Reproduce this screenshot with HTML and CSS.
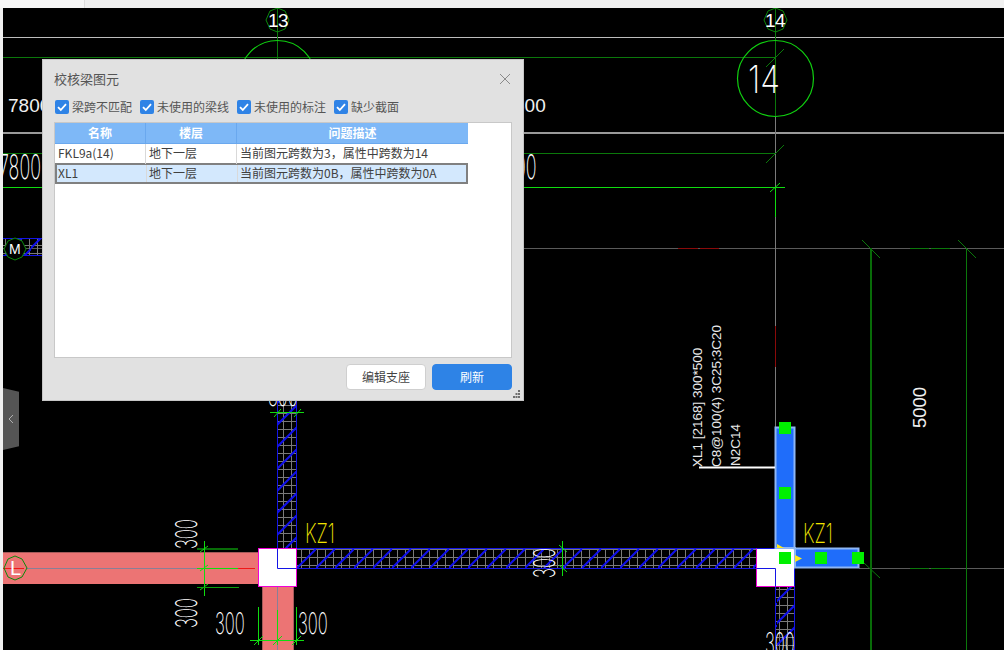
FILE: index.html
```html
<!DOCTYPE html>
<html lang="zh-CN">
<head>
<meta charset="utf-8">
<title>校核梁图元</title>
<link rel="stylesheet" href="styles.css">
</head>
<body>
<div class="app">
  <div class="topbar"><div class="topbar-tab"></div></div>
  <div class="work">
    <div class="gutter"></div>
    <div class="stage">
      <svg class="cad" width="1001" height="642" viewBox="3 8 1001 642" xmlns="http://www.w3.org/2000/svg">
        <defs>
          <pattern id="gridH" width="8" height="8" patternUnits="userSpaceOnUse" x="297" y="549">
            <path class="hatch-grid" d="M4.5 0V8M0 .5H8"/>
          </pattern>
          <pattern id="diagH" width="19" height="20" patternUnits="userSpaceOnUse" x="297" y="548">
            <path class="hatch-diag" d="M-1 21L21 -1M-2 2L2 -2"/>
          </pattern>
          <pattern id="gridV" width="8" height="8" patternUnits="userSpaceOnUse" x="279" y="401">
            <path class="hatch-grid" d="M4.5 0V8M0 4.500H8"/>
          </pattern>
          <pattern id="diagV" width="20" height="22" patternUnits="userSpaceOnUse" x="277" y="405">
            <path class="hatch-diag" d="M-1 21L21 -1"/>
          </pattern>
        </defs>

        <!-- grid lines -->
        <path class="ln-white" d="M3 37.5H1004"/>
        <path class="ln-dkgreen" d="M3 57.5H775M3 153.5H775"/>
        <path class="ln-grey2" d="M3 133H1004"/>
        <path class="ln-green" d="M3 187.5H785"/>
        <path class="ln-axis" d="M3 248.5H1004M859 568.5H1004"/>
        <path class="ln-axis-v" d="M775.5 117V427M775.5 587V650"/>
        <path class="ln-red" d="M678 248.5H698M700 248.5H719M775.5 326V367"/>
        <path class="ln-dkgreen" d="M910 248.5H929M931 248.5H950M910 568.5H929M931 568.5H950"/>
        <path class="ln-dkgreen" d="M775.5 8V117"/>
        <path class="ln-green" d="M775.5 187V217"/>
        <path class="ln-dkgreen" d="M277.5 8V60"/>
        <path class="ln-dkgreen" d="M766 67L784 49M766 163L784 145M862 240L880 258M958 240L976 258M864 563L880 578"/>
        <path class="ln-green" d="M770 192L780 183"/>
        <path class="ln-dkgreen2" d="M871 248V650"/>
        <path class="ln-dkgreen" d="M966.5 248V650"/>

        <!-- axis bubbles -->
        <circle class="bubble-big" cx="277.5" cy="78.5" r="38"/>
        <circle class="bubble-big" cx="775.5" cy="78.500" r="38"/>
        <polygon class="bubble-small" points="277.5,8 285,11 289,20 285,29 277.5,32 270,29 266,20 270,11"/>
        <polygon class="bubble-small" points="775.5,8 783,11 787,20 783,29 775.5,32 768,29 764,20 768,11"/>
        <text class="t-axis" x="268" y="27">13</text>
        <text class="t-axis" x="765" y="27">14</text>
        <text class="t-thin t-big14" transform="translate(748 93) scale(.85 1)">14</text>

        <!-- dimension text -->
        <text class="t-dim" x="8" y="112">7800</text>
        <text class="t-dim" x="514" y="112">800</text>
        <text class="t-thin t-tall" transform="translate(-1 179) scale(.85 1.6)">7800</text>
        <text class="t-thin t-tall" transform="translate(515 179) scale(.85 1.6)">00</text>
        <text class="t-dim5" transform="translate(926 428) rotate(-90)">5000</text>

        <!-- M bubble and hatch -->
        <rect class="fill-gridH" x="3" y="238" width="39" height="17"/>
        <rect class="fill-diagH" x="3" y="238" width="39" height="17"/>
        <path class="ln-blue" d="M3 238.5H42M3 255.5H42"/>
        <polygon class="bubble-small bubble-solid" points="15,238 22,241 26,249 22,257 15,260 8,257 4,249 8,241"/>
        <text class="t-bubble" x="9" y="254">M</text>

        <!-- pink beams -->
        <rect class="pink" x="3" y="552" width="256" height="32"/>
        <rect class="pink" x="262" y="587" width="32" height="63"/>
        <path class="ln-pink-edge" d="M3 552.5H258M262.5 587V650M293.5 587V650"/>
        <path class="ln-beam-c" d="M26 568.5H238M277.5 587V650"/>
        <path class="ln-redb" d="M3 568.5H24M238 568.5H255"/>

        <!-- hatched beams -->
        <rect class="fill-gridH" x="297" y="548" width="459" height="20"/>
        <rect class="fill-diagH" x="297" y="548" width="459" height="20"/>
        <path class="ln-blue" d="M297 548.5H756M297 568.5H756"/>
        <rect class="fill-gridV" x="277" y="401" width="20" height="147"/>
        <rect class="fill-diagV" x="277" y="401" width="20" height="147"/>
        <path class="ln-blue" d="M277.5 401V548M296.5 401V548"/>
        <rect class="fill-gridV" x="775" y="587" width="20" height="63"/>
        <rect class="fill-diagV" x="775" y="587" width="20" height="63"/>
        <path class="ln-blue" d="M775.5 587V650M794.5 587V650"/>

        <!-- columns -->
        <rect class="col" x="258.5" y="548.5" width="38" height="38"/>
        <path class="ln-blue" d="M277.5 548.5V568.5H296.5"/>
        <rect class="col" x="756.5" y="548.5" width="38" height="38"/>
        <path class="ln-blue" d="M756.5 568.5H775.5V586.5M756.5 548.5H794.5V586.5"/>

        <!-- selected beam -->
        <path class="selected" d="M775.5 427.5H794.5V548.5H858.5V567.5H795V548H775.5Z"/>
        <polygon class="arrow" points="777,544 784,548 777,548"/>
        <polygon class="arrow" points="795,555 802,558.5 795,562"/>
        <rect class="grip-g" x="779" y="422" width="12" height="12"/>
        <rect class="grip-g" x="779" y="487" width="12" height="12"/>
        <rect class="grip-g" x="779" y="552" width="12" height="12"/>
        <rect class="grip-g" x="815" y="552" width="12" height="12"/>
        <rect class="grip-g" x="852" y="552" width="12" height="12"/>
        <path class="ln-leader" d="M699 467.5H775"/>
        <text class="t-plain" transform="translate(702 467) rotate(-90)">XL1 [2168] 300*500</text>
        <text class="t-plain" transform="translate(721 467) rotate(-90)">C8@100(4) 3C25;3C20</text>
        <text class="t-plain" transform="translate(740 466) rotate(-90)">N2C14</text>

        <!-- dims around L -->
        <path class="ln-dkgreen2" d="M197 549H238"/>
        <path class="ln-green" d="M204.5 541V596M197 568.5H238M200 552L208 546M200 571L208 565M200 590L208 584"/>
        <path class="ln-midgreen" d="M197 587.5H239"/>
        <path class="ln-green" d="M258.5 607V645M277.5 610V645M296.5 607V645M250 640.5H304M254 645L263 636M273 645L282 636M292 645L301 636"/>
        <path class="ln-green" d="M562.5 541V576M559 545L567 552M559 565L567 572M270 412.5H304M274 417L281 409M294 417L301 409"/>

        <text class="t-thin t-300" transform="translate(197 549) rotate(-90) scale(.69 1.25)">300</text>
        <text class="t-thin t-300" transform="translate(197 628) rotate(-90) scale(.69 1.25)">300</text>
        <text class="t-thin t-300" transform="translate(215 634) scale(.69 1.25)">300</text>
        <text class="t-thin t-300" transform="translate(298 634) scale(.69 1.25)">300</text>
        <text class="t-thin t-300" transform="translate(555 578) rotate(-90) scale(.69 1.25)">300</text>
        <text class="t-thin t-300" transform="translate(765 654) scale(.69 1.25)">300</text>
        <text class="t-thin t-300" transform="translate(268 406) scale(.69 1.25)">300</text>

        <!-- L bubble -->
        <polygon class="bubble-small" points="15,556 22,559 27,568 22,577 15,580 8,577 4,568 8,559"/>
        <text class="t-bubble t-bubble-l" x="10" y="575">L</text>

        <!-- column names -->
        <text class="t-kz" transform="translate(305 543) scale(.77 1.15)">KZ1</text>
        <text class="t-kz" transform="translate(803 543) scale(.77 1.15)">KZ1</text>
      </svg>
      <div class="side-handle">
        <svg class="side-chevron" width="6" height="10" viewBox="0 0 6 10"><path d="M5 1L1 5L5 9"/></svg>
      </div>
    </div>
  </div>

  <section class="dialog">
    <header class="dialog-head">
      <h1 class="dialog-title">校核梁图元</h1>
      <svg class="dialog-close" width="12" height="12" viewBox="0 0 12 12"><path d="M1 1L11 11M11 1L1 11"/></svg>
    </header>
    <div class="filters">
      <label class="filter"><span class="check"><svg width="14" height="14" viewBox="0 0 14 14"><path d="M3 7.2L5.8 10L11 4.2"/></svg></span>梁跨不匹配</label>
      <label class="filter"><span class="check"><svg width="14" height="14" viewBox="0 0 14 14"><path d="M3 7.2L5.8 10L11 4.2"/></svg></span>未使用的梁线</label>
      <label class="filter"><span class="check"><svg width="14" height="14" viewBox="0 0 14 14"><path d="M3 7.2L5.8 10L11 4.2"/></svg></span>未使用的标注</label>
      <label class="filter"><span class="check"><svg width="14" height="14" viewBox="0 0 14 14"><path d="M3 7.2L5.8 10L11 4.2"/></svg></span>缺少截面</label>
    </div>
    <div class="table-box">
      <div class="tr th"><div class="c1">名称</div><div class="c2">楼层</div><div class="c3">问题描述</div></div>
      <div class="tr"><div class="c1">FKL9a(14)</div><div class="c2">地下一层</div><div class="c3">当前图元跨数为3，属性中跨数为14</div></div>
      <div class="tr tr-sel"><div class="c1">XL1</div><div class="c2">地下一层</div><div class="c3">当前图元跨数为0B，属性中跨数为0A</div></div>
    </div>
    <footer class="dialog-foot">
      <button class="btn">编辑支座</button>
      <button class="btn btn-primary">刷新</button>
    </footer>
    <svg class="resize-grip" width="8" height="8" viewBox="0 0 8 8"><path d="M5 0h2v2H5zM2.500 3h2v2h-2zM5 3h2v2H5zM0 6h2v2H0zM2.500 6h2v2h-2zM5 6h2v2H5z"/></svg>
  </section>
</div>
</body>
</html>
```

FILE: styles.css
```css
* { box-sizing: border-box; }
html, body { margin: 0; padding: 0; background: #000; overflow: hidden; }
.app {
  position: relative;
  width: 1004px;
  height: 650px;
  display: flex;
  flex-direction: column;
  font-family: "Noto Sans CJK SC", "Liberation Sans", sans-serif;
}
.topbar { height: 8px; background: #f0f0f0; flex: none; }
.topbar-tab { width: 85px; height: 8px; background: #f7f7f7; border-right: 1px solid #dedede; }
.work { flex: 1; display: flex; min-height: 0; }
.gutter { width: 3px; background: #f0f0f0; flex: none; }
.stage { position: relative; flex: 1; background: #000; overflow: hidden; }
.cad { display: block; }

/* CAD strokes */
.cad path, .cad circle, .cad polygon { fill: none; }
.ln-white { stroke: #bdbdbd; stroke-width: 1; }
.ln-grey2 { stroke: #9a9a9a; stroke-width: 2; }
.ln-dkgreen { stroke: #0b780b; stroke-width: 1; }
.ln-dkgreen2 { stroke: #086c08; stroke-width: 2; }
.ln-midgreen { stroke: #0ca00c; stroke-width: 1; }
.ln-green { stroke: #10dc10; stroke-width: 1; }
.ln-axis { stroke: #5a5a5a; stroke-width: 1; }
.ln-axis-v { stroke: #7a7a7a; stroke-width: 1; }
.ln-red { stroke: #8a0a0a; stroke-width: 1; }
.ln-redb { stroke: #f01818; stroke-width: 1; }
.ln-blue { stroke: #1414e6; stroke-width: 1; }
.ln-pink-edge { stroke: #a65a5a; stroke-width: 1; }
.ln-beam-c { stroke: #8a7f96; stroke-width: 1; }
.ln-leader { stroke: #fff; stroke-width: 2; }
.bubble-big { stroke: #10d010; stroke-width: 1.2; }
.cad .bubble-small { stroke: #0b8a0b; stroke-width: 1; }
.cad .bubble-solid { fill: #000; }
.pink { fill: #ec7474; }
.fill-gridH { fill: url(#gridH); }
.fill-diagH { fill: url(#diagH); }
.fill-gridV { fill: url(#gridV); }
.fill-diagV { fill: url(#diagV); }
.cad .hatch-grid { stroke: #7a7a7a; stroke-width: 1; }
.cad .hatch-diag { stroke: #1010ea; stroke-width: 2; }
.col { fill: #fff; stroke: #f000d8; stroke-width: 1; }
.cad .selected { fill: #1f6dfa; stroke: #8db6f4; stroke-width: 2; }
.cad .arrow { fill: #ffe81a; }
.grip-g { fill: #00f000; }

/* CAD text */
.cad text { font-family: "Liberation Sans", sans-serif; }
.cad .t-thin { font-family: "Inter", "Liberation Sans", sans-serif; font-weight: 200; fill: #fff; }
.t-axis { font-size: 19px; fill: #fff; letter-spacing: -.5px; }
.t-big14 { font-size: 38px; }
.t-dim { font-size: 19px; fill: #f0f0f0; }
.t-tall { font-size: 21px; }
.t-dim5 { font-size: 18.500px; fill: #f0f0f0; }
.t-300 { font-size: 24px; }
.t-plain { font-size: 13.5px; fill: #eaeaea; }
.t-bubble { font-size: 14px; fill: #fff; }
.t-bubble-l { font-size: 20px; }
.cad .t-kz { font-family: "Inter", "Liberation Sans", sans-serif; font-weight: 200; font-size: 24px; fill: #f2e400; }

/* side handle */
.side-handle {
  position: absolute;
  left: 0;
  top: 380px;
  width: 16px;
  height: 62px;
  background: #555;
  border-radius: 0 3px 3px 0;
  clip-path: polygon(0 0, 100% 6%, 100% 94%, 0 100%);
  display: flex;
  align-items: center;
  justify-content: center;
}
.side-chevron path { fill: none; stroke: #b0b0b0; stroke-width: 1; }

/* dialog */
.dialog {
  position: absolute;
  left: 42px;
  top: 59px;
  width: 482px;
  height: 342px;
  background: #e1e1e1;
  border: 1px solid #c6c6c6;
  padding: 0 11px;
  display: flex;
  flex-direction: column;
  color: #4a4a4a;
  font-size: 12px;
}
.dialog-head { height: 37px; flex: none; display: flex; align-items: center; justify-content: space-between; padding-right: 1px; }
.dialog-title { margin: 0; font-size: 13px; font-weight: 400; color: #555; line-height: 37px; }
.dialog-close path { fill: none; stroke: #8a8a8a; stroke-width: 1; }
.filters { display: flex; gap: 8px; height: 16px; align-items: center; margin: 2px 0 7px 1px; }
.filter { display: flex; align-items: center; gap: 3px; line-height: 16px; color: #555; }
.check { width: 14px; height: 14px; background: #2f83e6; border-radius: 2px; display: block; }
.check svg { display: block; }
.check path { fill: none; stroke: #fff; stroke-width: 1.8; }
.table-box { flex: none; height: 236px; background: #fff; border: 1px solid #c8c8c8; }
.tr { display: flex; width: 413px; height: 20px; line-height: 18px; color: #404040; }
.tr > div { padding: 0 3px; white-space: nowrap; border-right: 1px solid #d9d9d9; }
.tr > .c3 { border-right: 0; }
.c1, .c2 { width: 91px; flex: none; }
.c3 { flex: 1; }
.th { background: #7eb8f7; color: #fff; font-weight: 700; border-bottom: 1px solid #6aa8ee; height: 21px; line-height: 20px; }
.th > div { text-align: center; border-right-color: #6aa8ee; }
.tr-sel { background: #d3e8fd; border: 2px solid #808080; height: 21px; line-height: 15px; margin-top: -1px; }
.tr-sel > div { padding-left: 1px; }
.tr-sel > .c1 { width: 90px; padding-left: 1px; }
.tr-sel > .c2 { padding-left: 2px; }
.tr-sel > .c3 { padding-left: 2px; }
.dialog-foot { display: flex; justify-content: flex-end; gap: 6px; margin-top: 6px; }
.btn {
  width: 80px;
  height: 26px;
  background: #fff;
  border: 1px solid #cfcfcf;
  border-radius: 4px;
  font: inherit;
  color: #444;
  padding: 0 0 2px;
}
.btn-primary { background: #2e83e6; border-color: #2e83e6; color: #fff; }
.resize-grip { position: absolute; right: 2px; bottom: 2px; }
.resize-grip path { fill: #6e6e6e; }
```
